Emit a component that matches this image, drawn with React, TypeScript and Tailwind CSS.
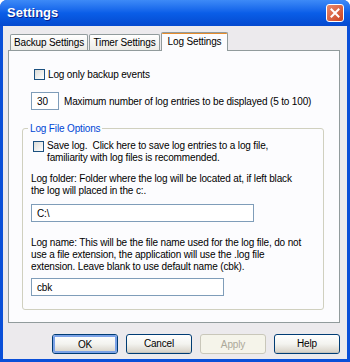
import React from 'react';

const font = { fontFamily: '"Liberation Sans", Arial, sans-serif' };

const Checkbox: React.FC = () => (
  <span className="mt-[1px] block h-[11px] w-[11px] shrink-0 border border-[#1c5180] bg-gradient-to-br from-[#dcdcd7] to-[#ffffff]" />
);

const TextBox: React.FC<{ value: string; className?: string }> = ({ value, className }) => (
  <div className={`flex h-[18px] items-center border border-[#7f9db9] bg-white px-[5px] text-black ${className ?? ''}`}>
    {value}
  </div>
);

const XPButton: React.FC<{ label: string; focused?: boolean; disabled?: boolean }> = ({ label, focused, disabled }) => {
  if (disabled) {
    return (
      <div className="flex h-[20px] w-[66px] items-center justify-center rounded-[3px] border border-[#c9c7ba] bg-[#f5f4ea] text-[#aca899]">
        {label}
      </div>
    );
  }
  return (
    <div className="h-[20px] w-[66px] rounded-[3px] border border-[#003c74] bg-gradient-to-b from-[#ffffff] via-[#f3f3ef] to-[#d6d0c5]">
      <div
        className={`flex h-full w-full items-center justify-center rounded-[2px] text-black ${
          focused ? 'border-2 border-[#7ba2e7]' : 'border-b border-[#c5c3bd]'
        }`}
      >
        {label}
      </div>
    </div>
  );
};

export default function App() {
  return (
    <div
      style={font}
      className="flex h-[362px] w-[350px] flex-col overflow-hidden rounded-t-[7px] bg-[#0a4fd8] text-[10px] tracking-[-0.15px]"
    >
      {/* title bar */}
      <div className="flex h-[26px] shrink-0 items-center justify-between bg-gradient-to-b from-[#3d8af7] via-[#0a5ee8] to-[#0549cf] pl-[7px] pr-[6px]">
        <span className="text-[13px] font-bold tracking-normal text-white [text-shadow:1px_1px_0_#0a1e8a]">Settings</span>
        <div className="flex h-[18px] w-[18px] items-center justify-center rounded-[3px] border border-white bg-gradient-to-br from-[#e9896c] to-[#c9401c]">
          <svg width="10" height="10" viewBox="0 0 10 10">
            <path d="M1.5 1.5 L8.5 8.5 M8.5 1.5 L1.5 8.5" stroke="white" strokeWidth="2" strokeLinecap="square" />
          </svg>
        </div>
      </div>

      {/* body */}
      <div className="mx-[3px] mb-[3px] flex flex-1 flex-col bg-[#eceaed] pl-[5px] pr-[7px] pt-[6px]">
        {/* tabs */}
        <div className="flex items-end text-black">
          <div className="ml-[2px] flex h-[16px] w-[78px] items-center justify-center rounded-t-[2px] border border-b-0 border-[#919b9c] bg-gradient-to-b from-[#ffffff] to-[#ecebe6]">
            Backup Settings
          </div>
          <div className="ml-[1px] flex h-[16px] w-[71px] items-center justify-center rounded-t-[2px] border border-b-0 border-[#919b9c] bg-gradient-to-b from-[#ffffff] to-[#ecebe6]">
            Timer Settings
          </div>
          <div className="relative -mb-[1px] ml-[1px] flex h-[19px] w-[67px] flex-col rounded-t-[2px] border border-b-0 border-[#919b9c] bg-[#fcfcfe]">
            <div className="h-[3px] rounded-t-[2px] border-t border-[#e68b2c] bg-[#ffc83c]" />
            <div className="flex flex-1 items-center justify-center pb-[2px]">Log Settings</div>
          </div>
        </div>

        {/* panel */}
        <div className="flex h-[273px] flex-col border border-[#919b9c] bg-[#fcfcfe] pl-[22px] pr-[8px] pt-[17px] text-black">
          <div className="ml-[3px] flex items-start gap-[3px]">
            <Checkbox />
            <span className="leading-[13px]">Log only backup events</span>
          </div>

          <div className="mt-[11px] flex items-center gap-[5px]">
            <TextBox value="30" className="w-[28px]" />
            <span>Maximum number of log entries to be displayed (5 to 100)</span>
          </div>

          {/* group box */}
          <div className="relative -ml-[9px] mt-[18px] h-[182px] w-[302px] rounded-[3px] border border-[#d0d0bf] pl-[8px] pr-[4px] pt-[11px]">
            <span className="absolute -top-[8px] left-[5px] bg-[#fcfcfe] px-[2px] text-[#0046d5]">Log File Options</span>
            <div className="ml-[2px] flex items-start gap-[3px]">
              <Checkbox />
              <span className="leading-[12px]">
                Save log.&nbsp; Click here to save log entries to a log file,
                <br />
                familiarity with log files is recommended.
              </span>
            </div>
            <p className="mt-[9px] leading-[12px]">
              Log folder: Folder where the log will be located at, if left black
              <br />
              the log will placed in the c:.
            </p>
            <TextBox value="C:\" className="mt-[7px] w-[223px]" />
            <p className="mt-[15px] leading-[12px]">
              Log name: This will be the file name used for the log file, do not
              <br />
              use a file extension, the application will use the .log file
              <br />
              extension. Leave blank to use default name (cbk).
            </p>
            <TextBox value="cbk" className="mt-[5px] w-[193px]" />
          </div>
        </div>

        {/* buttons */}
        <div className="mt-[11px] flex justify-end gap-[8px]">
          <XPButton label="OK" focused />
          <XPButton label="Cancel" />
          <XPButton label="Apply" disabled />
          <XPButton label="Help" />
        </div>
      </div>
    </div>
  );
}
